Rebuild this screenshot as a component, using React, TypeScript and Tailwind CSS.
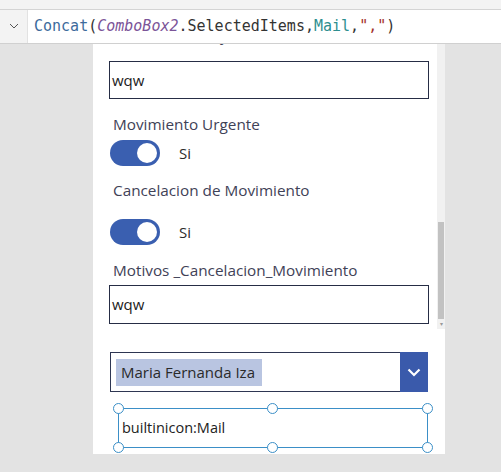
import React from 'react';

const Toggle: React.FC<{ label: string }> = ({ label }) => (
  <div className="flex items-center h-[26px] pl-px">
    <div className="w-[50px] h-[26px] rounded-full bg-[#3a5fb0] flex items-center justify-end pr-[3px]">
      <div className="w-[20px] h-[20px] rounded-full bg-white" />
    </div>
    <span className="ml-[19px] text-[15px] text-[#2b2b2b]">{label}</span>
  </div>
);

const Handle: React.FC<{ className: string }> = ({ className }) => (
  <span className={`absolute w-[11px] h-[11px] rounded-full bg-white border border-[#3b8fc7] ${className}`} />
);

export default function App() {
  return (
    <div className="w-[501px] h-[472px] bg-[#e3e3e3] overflow-hidden flex flex-col font-['Open_Sans',sans-serif]">
      {/* formula bar */}
      <div className="h-[10px] bg-[#f3f3f3] border-b border-[#d4d4d4] shrink-0" />
      <div className="h-[34px] flex shrink-0 border-b border-[#d0d0d0] bg-white">
        <div className="w-[28px] bg-[#f3f3f3] border-r border-[#e2e2e2] flex items-center justify-center">
          <svg width="10" height="6" viewBox="0 0 10 6" className="mb-px">
            <polyline points="1,1 5,5 9,1" fill="none" stroke="#555" strokeWidth="1" />
          </svg>
        </div>
        <div className="flex-1 flex items-center pl-[6px] font-['DejaVu_Sans_Mono',monospace] text-[15px] whitespace-pre">
          <span className="text-[#3d6b9c]">Concat</span>
          <span className="text-[#333]">(</span>
          <span className="text-[#7b5498] italic">ComboBox2</span>
          <span className="text-[#333]">.SelectedItems,</span>
          <span className="text-[#2e8f8f]">Mail</span>
          <span className="text-[#333]">,</span>
          <span className="text-[#a3302a]">","</span>
          <span className="text-[#333]">)</span>
        </div>
      </div>

      {/* canvas */}
      <div className="flex-1 pl-[93px]">
        <div className="w-[352px] h-[410px] bg-white flex overflow-hidden">
          <div className="w-[344px] flex flex-col pl-[16px]">
            <div className="h-[6px] shrink-0 overflow-hidden">
              <div className="-mt-[19px] pl-[4px] text-[15.3px] leading-[20px] text-[#3f4257] whitespace-nowrap">
                Motivos _Trabajo_Movimiento
              </div>
            </div>
            <div className="mt-[11px] shrink-0 w-[320px] h-[38px] border border-[#262d45] flex items-center pl-[2px] text-[15px] text-[#222]">
              wqw
            </div>
            <div className="mt-[15px] shrink-0 h-[20px] pl-[4px] text-[15.3px] leading-[20px] text-[#3f4257]">Movimiento Urgente</div>
            <div className="mt-[6px] shrink-0">
              <Toggle label="Si" />
            </div>
            <div className="mt-[14px] shrink-0 h-[20px] pl-[4px] text-[15.3px] leading-[20px] text-[#3f4257]">Cancelacion de Movimiento</div>
            <div className="mt-[19px] shrink-0">
              <Toggle label="Si" />
            </div>
            <div className="mt-[15px] shrink-0 h-[20px] pl-[4px] text-[15.3px] leading-[20px] text-[#3f4257]">Motivos _Cancelacion_Movimiento</div>
            <div className="mt-[5px] shrink-0 w-[320px] h-[39px] border border-[#262d45] flex items-center pl-[2px] text-[15px] text-[#222]">
              wqw
            </div>
            <div className="mt-[28px] shrink-0 ml-px w-[318px] h-[40px] border border-[#2e3652] flex">
              <div className="flex-1 flex items-center pl-[5px]">
                <span className="h-[27px] w-[146px] bg-[#b9c5e1] flex items-center pl-[5px] text-[15px] text-[#2a2a2a] whitespace-nowrap">
                  Maria Fernanda Iza
                </span>
              </div>
              <div className="w-[28px] bg-[#3a5aab] -my-px -mr-px flex items-center justify-center">
                <svg width="14" height="9" viewBox="0 0 14 9">
                  <polyline points="1.5,1.5 7,7 12.5,1.5" fill="none" stroke="#fff" strokeWidth="2.2" />
                </svg>
              </div>
            </div>
            <div className="mt-[16px] shrink-0 ml-[9px] w-[310px] h-[40px] relative border-[1.5px] border-[#3b8fc7] flex items-center pl-[3px] text-[14.5px] text-[#222]">
              builtinicon:Mail
              <Handle className="-top-[6px] -left-[6px]" />
              <Handle className="-top-[6px] left-[148px]" />
              <Handle className="-top-[6px] -right-[6px]" />
              <Handle className="-bottom-[6px] -left-[6px]" />
              <Handle className="-bottom-[6px] left-[148px]" />
              <Handle className="-bottom-[6px] -right-[6px]" />
            </div>
          </div>
          {/* scrollbar */}
          <div className="w-[8px] h-[285px] bg-[#f1f1f1] flex flex-col">
            <div className="mt-[178px] mx-px h-[97px] bg-[#c2c2c2]" />
            <div className="flex-1 flex items-center justify-center text-[6px] text-[#999]">▾</div>
          </div>
        </div>
      </div>
    </div>
  );
}
